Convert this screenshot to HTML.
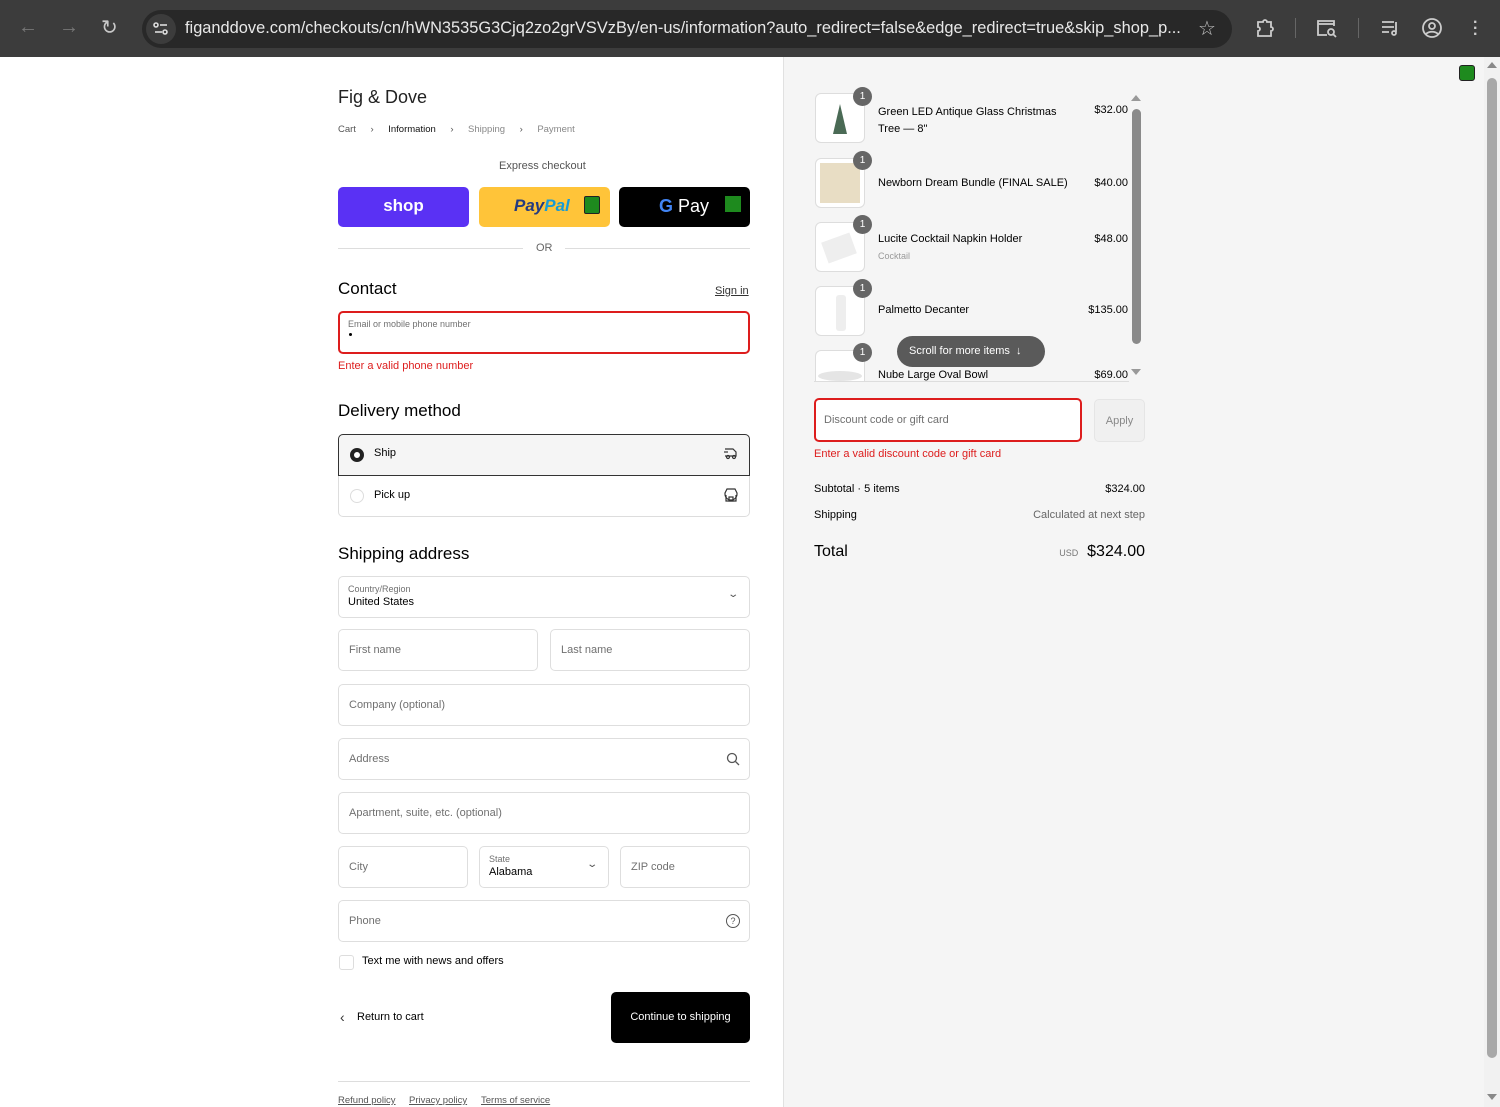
<!DOCTYPE html>
<html><head><meta charset="utf-8">
<style>
*{box-sizing:border-box;margin:0;padding:0}
body{width:1500px;height:1107px;overflow:hidden;font-family:"Liberation Sans",Arial,sans-serif;background:#fff;position:relative;color:#000}
.a{position:absolute}
.top{left:0;top:0;width:1500px;height:57px;background:#3c3c3c}
.pill{left:142px;top:10px;width:1090px;height:38px;border-radius:19px;background:#282828}
.url{left:185px;top:19px;color:#e8e8e8;font-size:16.4px;white-space:nowrap}
.ic{color:#c8c8c8;font-size:20px}
.right{left:783px;top:57px;width:701px;height:1050px;background:#f5f5f5;border-left:1px solid #e1e1e1}
.sb{left:1484px;top:57px;width:16px;height:1050px;background:#f1f1f1}
.inp{position:absolute;border:1px solid #dedede;border-radius:5px;background:#fff;font-size:11px;color:#707070}
.inp span{position:absolute;left:10px;top:50%;transform:translateY(-50%)}
.small{font-size:9px;color:#707070}
.h2{font-size:17px;color:#000}
.thumb{position:absolute;left:815px;width:50px;height:50px;border:1px solid #ddd;border-radius:6px;background:#fff}
.badge{position:absolute;width:19px;height:19px;border-radius:50%;background:#666;color:#fff;font-size:10px;text-align:center;line-height:19px}
.it{position:absolute;left:878px;font-size:11px;color:#000}
.pr{position:absolute;right:372px;font-size:11px}
</style></head><body>
<div class="a top"></div>
<div class="a ic" style="left:18px;top:16px;color:#777">&#8592;</div>
<div class="a ic" style="left:59px;top:16px;color:#777">&#8594;</div>
<div class="a ic" style="left:101px;top:15px">&#8635;</div>
<div class="a pill"></div>
<div class="a" style="left:146px;top:14px;width:30px;height:30px;border-radius:50%;background:#3c3c3c"></div>
<svg class="a" style="left:152px;top:20px" width="18" height="18" viewBox="0 0 18 18" fill="none" stroke="#ddd" stroke-width="1.6"><circle cx="4" cy="5" r="2"/><line x1="8" y1="5" x2="15" y2="5"/><circle cx="13" cy="12" r="2"/><line x1="3" y1="12" x2="10" y2="12"/></svg>
<div class="a url">figanddove.com/checkouts/cn/hWN3535G3Cjq2zo2grVSVzBy/en-us/information?auto_redirect=false&amp;edge_redirect=true&amp;skip_shop_p...</div>
<div class="a ic" style="left:1198px;top:16px">&#9734;</div>
<svg class="a" style="left:1254px;top:17px" width="22" height="22" viewBox="0 0 22 22" fill="none" stroke="#ccc" stroke-width="1.8"><path d="M4 5h5a2 2 0 014 0h4v5a2 2 0 010 4v5H4v-5a2 2 0 000-4z"/></svg>
<div class="a" style="left:1295px;top:18px;width:1px;height:20px;background:#666"></div>
<svg class="a" style="left:1315px;top:17px" width="24" height="22" viewBox="0 0 24 22" fill="none" stroke="#ccc" stroke-width="1.8"><path d="M12 18H3V4h16v5"/><path d="M3 7h16"/><circle cx="16" cy="15" r="3"/><line x1="18" y1="17" x2="21" y2="20"/></svg>
<div class="a" style="left:1358px;top:18px;width:1px;height:20px;background:#666"></div>
<svg class="a" style="left:1380px;top:18px" width="22" height="20" viewBox="0 0 22 20" fill="none" stroke="#ccc" stroke-width="1.8"><path d="M2 4h12M2 9h12M2 14h7"/><path d="M16 4v10"/><circle cx="14" cy="15" r="2"/></svg>
<svg class="a" style="left:1421px;top:17px" width="22" height="22" viewBox="0 0 22 22" fill="none" stroke="#ccc" stroke-width="1.8"><circle cx="11" cy="11" r="9"/><circle cx="11" cy="9" r="3"/><path d="M5 17c3-3 9-3 12 0"/></svg>
<div class="a" style="left:1473px;top:20px;color:#ccc;font-size:16px;line-height:6px;font-weight:bold">·<br>·<br>·</div>

<div class="a right"></div>
<div class="a sb"></div>
<div class="a" style="left:1487px;top:62px;width:0;height:0;border-left:5px solid transparent;border-right:5px solid transparent;border-bottom:6px solid #888"></div>
<div class="a" style="left:1487px;top:78px;width:10px;height:980px;border-radius:5px;background:#a8a8a8"></div>
<div class="a" style="left:1487px;top:1094px;width:0;height:0;border-left:5px solid transparent;border-right:5px solid transparent;border-top:6px solid #888"></div>
<div class="a" style="left:1459px;top:65px;width:16px;height:16px;background:#1e8a1e;border:1px solid #222;border-radius:3px"></div>

<!-- LEFT -->
<div class="a" style="left:338px;top:87px;font-size:18px;color:#222">Fig &amp; Dove</div>
<div class="a" style="left:338px;top:124px;font-size:9.5px;color:#555;white-space:nowrap;word-spacing:1px">Cart &nbsp;&nbsp;&nbsp;&#8250;&nbsp;&nbsp;&nbsp; <span style="color:#111">Information</span> &nbsp;&nbsp;&nbsp;&#8250;&nbsp;&nbsp;&nbsp; <span style="color:#888">Shipping</span> &nbsp;&nbsp;&nbsp;&#8250;&nbsp;&nbsp;&nbsp; <span style="color:#888">Payment</span></div>
<div class="a" style="left:499px;top:160px;font-size:11px;color:#555">Express checkout</div>
<div class="a" style="left:338px;top:187px;width:131px;height:40px;border-radius:5px;background:#5a31f4;color:#fff;font-size:17px;font-weight:bold;text-align:center;line-height:38px">shop</div>
<div class="a" style="left:479px;top:187px;width:131px;height:40px;border-radius:5px;background:#ffc439"></div>
<div class="a" style="left:514px;top:196px;font-size:17px;font-weight:bold;font-style:italic;color:#253b80">Pay<span style="color:#179bd7">Pal</span></div>
<div class="a" style="left:584px;top:196px;width:16px;height:18px;background:#1e8a1e;border:1.5px solid #222;border-radius:2px"></div>
<div class="a" style="left:619px;top:187px;width:131px;height:40px;border-radius:5px;background:#000"></div>
<div class="a" style="left:659px;top:196px;font-size:18px;color:#fff"><span style="color:#4285f4;font-weight:bold">G</span> Pay</div>
<div class="a" style="left:725px;top:196px;width:16px;height:16px;background:#1e8a1e"></div>
<div class="a" style="left:338px;top:248px;width:185px;height:1px;background:#ddd"></div>
<div class="a" style="left:565px;top:248px;width:185px;height:1px;background:#ddd"></div>
<div class="a" style="left:536px;top:242px;font-size:11px;color:#666">OR</div>

<div class="a h2" style="left:338px;top:279px">Contact</div>
<div class="a" style="left:715px;top:285px;font-size:11px;color:#333;text-decoration:underline">Sign in</div>
<div class="a" style="left:338px;top:311px;width:412px;height:43px;border:2px solid #dd1d1d;border-radius:5px;background:#fff"></div>
<div class="a small" style="left:348px;top:319px">Email or mobile phone number</div>
<div class="a" style="left:349px;top:333px;width:3px;height:3px;background:#000;border-radius:50%"></div>
<div class="a" style="left:338px;top:360px;font-size:11px;color:#dd1d1d">Enter a valid phone number</div>

<div class="a h2" style="left:338px;top:401px">Delivery method</div>
<div class="a" style="left:338px;top:434px;width:412px;height:83px;border:1px solid #ddd;border-radius:5px;background:#fff"></div>
<div class="a" style="left:338px;top:434px;width:412px;height:42px;border:1px solid #333;border-radius:5px 5px 0 0;background:#f5f5f5"></div>
<div class="a" style="left:350px;top:448px;width:14px;height:14px;border-radius:50%;border:4px solid #222;background:#fff"></div>
<div class="a" style="left:374px;top:447px;font-size:11px">Ship</div>
<svg class="a" style="left:723px;top:446px" width="16" height="14" viewBox="0 0 16 14" fill="none" stroke="#333" stroke-width="1.2"><path d="M2 3h8l3 3v4H2"/><circle cx="5" cy="11" r="1.5"/><circle cx="11" cy="11" r="1.5"/><path d="M1 6h4"/></svg>
<div class="a" style="left:350px;top:489px;width:14px;height:14px;border-radius:50%;border:1px solid #ddd"></div>
<div class="a" style="left:374px;top:489px;font-size:11px">Pick up</div>
<svg class="a" style="left:723px;top:488px" width="16" height="14" viewBox="0 0 16 14" fill="none" stroke="#333" stroke-width="1.2"><path d="M2 5l2-4h8l2 4v1a2 2 0 01-12 0z"/><path d="M3 7v6h10V7"/><rect x="6" y="9" width="4" height="4"/></svg>

<div class="a h2" style="left:338px;top:544px">Shipping address</div>
<div class="inp" style="left:338px;top:576px;width:412px;height:42px"></div>
<div class="a small" style="left:348px;top:584px">Country/Region</div>
<div class="a" style="left:348px;top:596px;font-size:11px">United States</div>
<div class="a" style="left:729px;top:589px;font-size:10px;color:#555;transform:scaleX(1.4)">&#8964;</div>
<div class="inp" style="left:338px;top:629px;width:200px;height:42px"><span>First name</span></div>
<div class="inp" style="left:550px;top:629px;width:200px;height:42px"><span>Last name</span></div>
<div class="inp" style="left:338px;top:684px;width:412px;height:42px"><span>Company (optional)</span></div>
<div class="inp" style="left:338px;top:738px;width:412px;height:42px"><span>Address</span></div>
<svg class="a" style="left:726px;top:752px" width="14" height="14" viewBox="0 0 14 14" fill="none" stroke="#555" stroke-width="1.3"><circle cx="6" cy="6" r="4.5"/><line x1="9.5" y1="9.5" x2="13" y2="13"/></svg>
<div class="inp" style="left:338px;top:792px;width:412px;height:42px"><span>Apartment, suite, etc. (optional)</span></div>
<div class="inp" style="left:338px;top:846px;width:130px;height:42px"><span>City</span></div>
<div class="inp" style="left:479px;top:846px;width:130px;height:42px"></div>
<div class="a small" style="left:489px;top:854px">State</div>
<div class="a" style="left:489px;top:866px;font-size:11px">Alabama</div>
<div class="a" style="left:588px;top:859px;font-size:10px;color:#555;transform:scaleX(1.4)">&#8964;</div>
<div class="inp" style="left:620px;top:846px;width:130px;height:42px"><span>ZIP code</span></div>
<div class="inp" style="left:338px;top:900px;width:412px;height:42px"><span>Phone</span></div>
<div class="a" style="left:726px;top:914px;width:14px;height:14px;border:1.2px solid #555;border-radius:50%;font-size:9px;text-align:center;line-height:12px;color:#555">?</div>
<div class="a" style="left:339px;top:955px;width:15px;height:15px;border:1px solid #ddd;border-radius:3px"></div>
<div class="a" style="left:362px;top:955px;font-size:11px">Text me with news and offers</div>
<div class="a" style="left:340px;top:1009px;font-size:14px;color:#333">&#8249;</div>
<div class="a" style="left:357px;top:1011px;font-size:11px">Return to cart</div>
<div class="a" style="left:611px;top:992px;width:139px;height:51px;border-radius:5px;background:#000;color:#fff;font-size:11px;text-align:center;line-height:51px">Continue to shipping</div>
<div class="a" style="left:338px;top:1081px;width:412px;height:1px;background:#ddd"></div>
<div class="a" style="left:338px;top:1095px;font-size:9.5px;color:#555;text-decoration:underline">Refund policy</div>
<div class="a" style="left:409px;top:1095px;font-size:9.5px;color:#555;text-decoration:underline">Privacy policy</div>
<div class="a" style="left:481px;top:1095px;font-size:9.5px;color:#555;text-decoration:underline">Terms of service</div>

<!-- RIGHT -->
<div class="thumb" style="top:93px"><div style="position:absolute;left:17px;top:10px;width:0;height:0;border-left:7px solid transparent;border-right:7px solid transparent;border-bottom:30px solid #4a6a55"></div></div>
<div class="badge" style="left:853px;top:87px">1</div>
<div class="it" style="top:104px;line-height:17px">Green LED Antique Glass Christmas<br>Tree — 8"</div><div class="pr" style="top:104px">$32.00</div>
<div class="thumb" style="top:158px"><div style="position:absolute;left:4px;top:4px;width:40px;height:40px;background:#e8ddc4"></div></div>
<div class="badge" style="left:853px;top:151px">1</div>
<div class="it" style="top:177px">Newborn Dream Bundle (FINAL SALE)</div><div class="pr" style="top:177px">$40.00</div>
<div class="thumb" style="top:222px"><div style="position:absolute;left:8px;top:14px;width:30px;height:22px;background:#eee;transform:rotate(-20deg)"></div></div>
<div class="badge" style="left:853px;top:215px">1</div>
<div class="it" style="top:233px">Lucite Cocktail Napkin Holder</div><div class="a" style="left:878px;top:251px;font-size:9px;color:#999">Cocktail</div><div class="pr" style="top:233px">$48.00</div>
<div class="thumb" style="top:286px"><div style="position:absolute;left:20px;top:8px;width:10px;height:36px;background:#eee;border-radius:3px"></div></div>
<div class="badge" style="left:853px;top:279px">1</div>
<div class="it" style="top:304px">Palmetto Decanter</div><div class="pr" style="top:304px">$135.00</div>
<div class="a" style="left:815px;top:350px;width:50px;height:32px;border:1px solid #ddd;border-bottom:none;border-radius:6px 6px 0 0;background:#fff;overflow:hidden"><div style="position:absolute;left:2px;top:20px;width:44px;height:10px;background:#e5e5e5;border-radius:50%"></div></div>
<div class="badge" style="left:853px;top:343px">1</div>
<div class="it" style="top:369px">Nube Large Oval Bowl</div><div class="pr" style="top:369px">$69.00</div>
<div class="a" style="left:814px;top:381px;width:315px;height:1px;background:#ddd"></div>
<div class="a" style="left:897px;top:336px;width:148px;height:31px;border-radius:16px;background:#5a5a5a;color:#fff;font-size:11px;line-height:31px;padding-left:12px">Scroll for more items &nbsp;&#8595;</div>
<div class="a" style="left:1131px;top:95px;width:0;height:0;border-left:5px solid transparent;border-right:5px solid transparent;border-bottom:6px solid #999"></div>
<div class="a" style="left:1132px;top:109px;width:9px;height:235px;border-radius:5px;background:#8a8a8a"></div>
<div class="a" style="left:1131px;top:369px;width:0;height:0;border-left:5px solid transparent;border-right:5px solid transparent;border-top:6px solid #999"></div>

<div class="a" style="left:814px;top:398px;width:268px;height:44px;border:2px solid #dd1d1d;border-radius:5px;background:#fff"></div>
<div class="a" style="left:824px;top:414px;font-size:11px;color:#707070">Discount code or gift card</div>
<div class="a" style="left:1094px;top:399px;width:51px;height:43px;border:1px solid #e5e5e5;border-radius:5px;background:#f0f0f0;font-size:11px;color:#888;text-align:center;line-height:42px">Apply</div>
<div class="a" style="left:814px;top:448px;font-size:11px;color:#dd1d1d">Enter a valid discount code or gift card</div>
<div class="a" style="left:814px;top:483px;font-size:11px">Subtotal · 5 items</div>
<div class="a" style="right:355px;top:483px;font-size:11px">$324.00</div>
<div class="a" style="left:814px;top:509px;font-size:11px">Shipping</div>
<div class="a" style="right:355px;top:509px;font-size:11px;color:#666">Calculated at next step</div>
<div class="a" style="left:814px;top:543px;font-size:16px">Total</div>
<div class="a" style="right:355px;top:543px;font-size:16px"><span style="font-size:9px;color:#777">USD</span>&nbsp; $324.00</div>
</body></html>
